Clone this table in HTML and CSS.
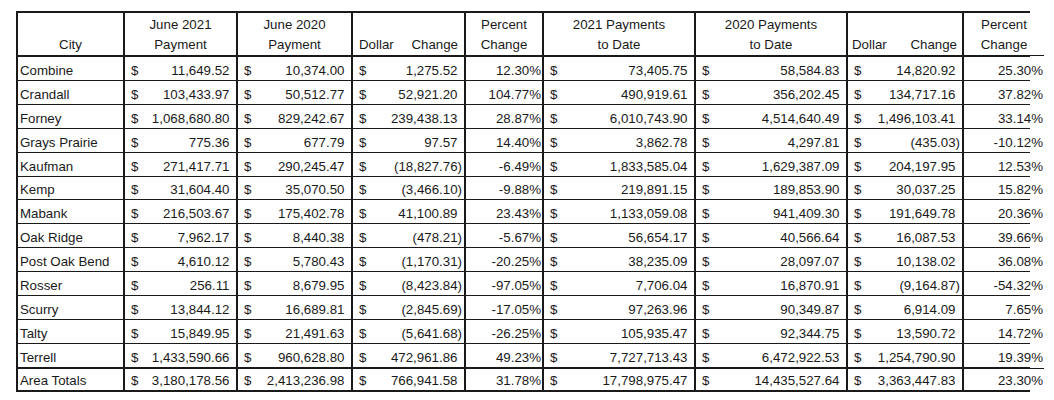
FILE: index.html
```html
<!DOCTYPE html>
<html>
<head>
<meta charset="utf-8">
<link rel="stylesheet" href="styles.css">
</head>
<body>
<div class="sheet">
  <div class="h hc">City</div>
  <div class="h">June 2021<br>Payment</div>
  <div class="h">June 2020<br>Payment</div>
  <div class="h hs"><span>Dollar</span><span class="pr">Change</span></div>
  <div class="h">Percent<br>Change</div>
  <div class="h">2021 Payments<br>to Date</div>
  <div class="h">2020 Payments<br>to Date</div>
  <div class="h hs h8"><span>Dollar</span><span>Change</span></div>
  <div class="h">Percent<br>Change</div>
</div>
<script src="app.js"></script>
</body>
</html>
```
FILE: styles.css
```css
html, body { margin: 0; padding: 0; background: #ffffff; }
body { padding: 11px 0 0 16px; }
.sheet {
  display: grid;
  width: 1010px;
  grid-template-columns: 105px 111px 113px 111px 76px 150px 150px 114px 80px;
  grid-template-rows: 43px repeat(13, 22.92px) 22px;
  column-gap: 2px;
  row-gap: 1px;
  padding: 2px;
  background: #1a1a1a;
  font-family: "Liberation Sans", Arial, sans-serif;
  font-size: 13.3px;
  color: #1a1a1a;
}
.sheet > div {
  box-sizing: border-box;
  background: #ffffff;
  display: flex;
  align-items: flex-end;
  line-height: 17px;
  padding-bottom: 1px;
  white-space: nowrap;
  overflow: hidden;
  min-height: 0;
}
.sheet > .h {
  line-height: 20px;
  padding-bottom: 0;
  justify-content: center;
  text-align: center;
  border-bottom: 1px solid #1a1a1a;
}
.sheet > .hs { justify-content: space-between; padding-left: 6px; padding-right: 6px; }
.sheet > .h8 { padding-left: 4px; padding-right: 5px; }
.sheet > .city { padding-left: 2px; }
.sheet > .m { justify-content: space-between; padding-left: 6px; padding-right: 2px; }
.sheet > .pc { justify-content: flex-end; padding-right: 1px; }
.pos { padding-right: 4.5px; }
.sheet > .tot { border-top: 1px solid #1a1a1a; padding-bottom: 1px; }
```
FILE: app.js
```js
const rows = [
["Combine","11,649.52","10,374.00","1,275.52","12.30%","73,405.75","58,584.83","14,820.92","25.30%"],
["Crandall","103,433.97","50,512.77","52,921.20","104.77%","490,919.61","356,202.45","134,717.16","37.82%"],
["Forney","1,068,680.80","829,242.67","239,438.13","28.87%","6,010,743.90","4,514,640.49","1,496,103.41","33.14%"],
["Grays Prairie","775.36","677.79","97.57","14.40%","3,862.78","4,297.81","(435.03)","-10.12%"],
["Kaufman","271,417.71","290,245.47","(18,827.76)","-6.49%","1,833,585.04","1,629,387.09","204,197.95","12.53%"],
["Kemp","31,604.40","35,070.50","(3,466.10)","-9.88%","219,891.15","189,853.90","30,037.25","15.82%"],
["Mabank","216,503.67","175,402.78","41,100.89","23.43%","1,133,059.08","941,409.30","191,649.78","20.36%"],
["Oak Ridge","7,962.17","8,440.38","(478.21)","-5.67%","56,654.17","40,566.64","16,087.53","39.66%"],
["Post Oak Bend","4,610.12","5,780.43","(1,170.31)","-20.25%","38,235.09","28,097.07","10,138.02","36.08%"],
["Rosser","256.11","8,679.95","(8,423.84)","-97.05%","7,706.04","16,870.91","(9,164.87)","-54.32%"],
["Scurry","13,844.12","16,689.81","(2,845.69)","-17.05%","97,263.96","90,349.87","6,914.09","7.65%"],
["Talty","15,849.95","21,491.63","(5,641.68)","-26.25%","105,935.47","92,344.75","13,590.72","14.72%"],
["Terrell","1,433,590.66","960,628.80","472,961.86","49.23%","7,727,713.43","6,472,922.53","1,254,790.90","19.39%"],
["Area Totals","3,180,178.56","2,413,236.98","766,941.58","31.78%","17,798,975.47","14,435,527.64","3,363,447.83","23.30%"]
];
const sheet = document.querySelector('.sheet');
rows.forEach((r, ri) => {
  const total = ri === rows.length - 1;
  r.forEach((v, ci) => {
    const d = document.createElement('div');
    if (ci === 0) {
      d.className = 'city';
      d.textContent = v;
    } else if (ci === 4 || ci === 8) {
      d.className = 'pc';
      d.textContent = v;
    } else {
      d.className = 'm';
      const s = document.createElement('span');
      s.textContent = '$';
      const n = document.createElement('span');
      n.textContent = v;
      if (v.charAt(0) !== '(') n.className = 'pos';
      d.appendChild(s);
      d.appendChild(n);
    }
    if (total) d.classList.add('tot');
    sheet.appendChild(d);
  });
});
```
